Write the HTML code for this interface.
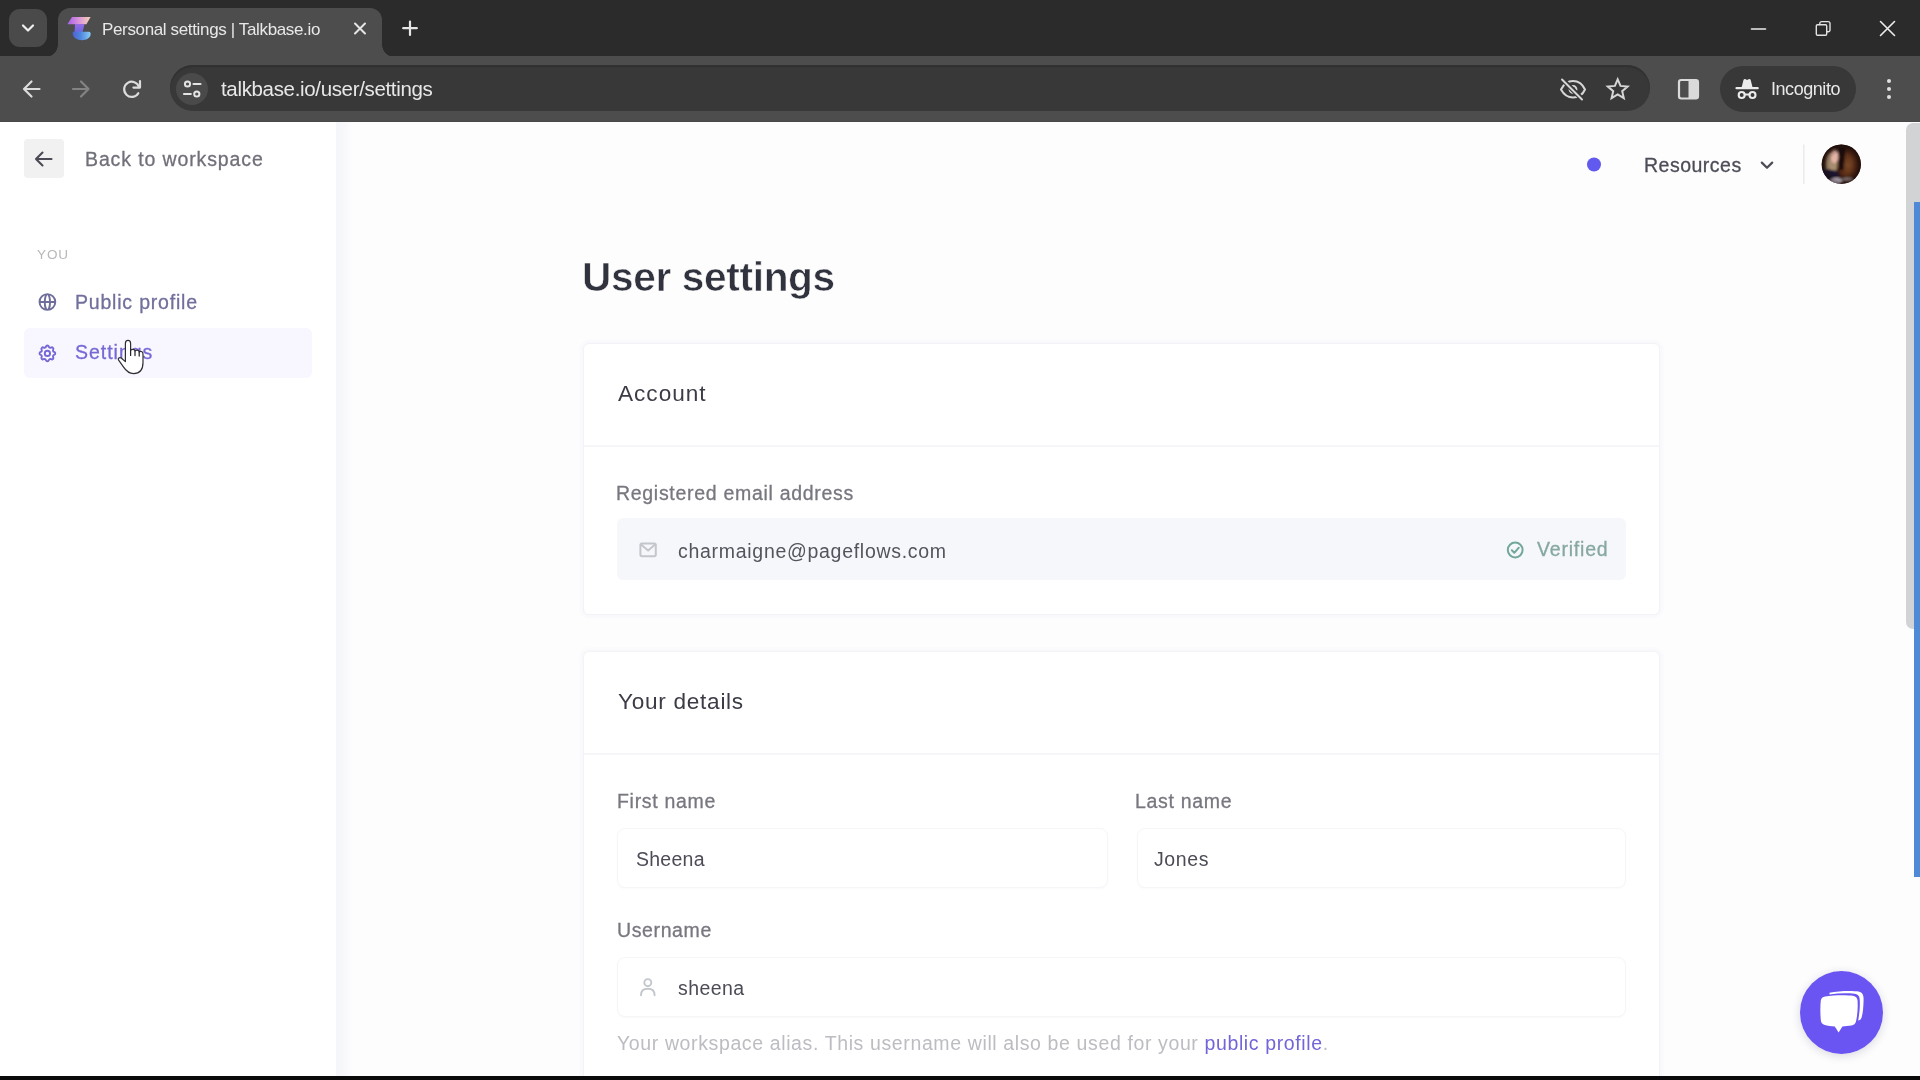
<!DOCTYPE html>
<html lang="en">
<head>
<meta charset="utf-8">
<title>Personal settings | Talkbase.io</title>
<style>
*{box-sizing:border-box;margin:0;padding:0}
html,body{width:1920px;height:1080px;overflow:hidden;background:#fff}
body{font-family:"Liberation Sans",Arial,sans-serif;position:relative;color:#3a3b45}
.abs{position:absolute}
.t{position:absolute;white-space:pre;line-height:1;will-change:transform}
/* ---------- browser chrome ---------- */
#tabstrip{left:0;top:0;width:1920px;height:57px;background:#2b2b2b}
#toolbar{left:0;top:56px;width:1920px;height:66px;background:#4d4d4d;border-bottom:1px solid #49494b}
#tabsearch{left:9px;top:9px;width:38px;height:38px;border-radius:11px;background:#4a4a4a}
#tab{left:58px;top:8px;width:324px;height:49px;background:#4d4d4d;border-radius:12px 12px 0 0}
#tab:before,#tab:after{content:"";position:absolute;bottom:0;width:12px;height:12px;background:radial-gradient(circle at 0 0,rgba(0,0,0,0) 11.5px,#4d4d4d 12px)}
#tab:before{left:-12px}
#tab:after{right:-12px;background:radial-gradient(circle at 100% 0,rgba(0,0,0,0) 11.5px,#4d4d4d 12px)}
#omni{left:170px;top:65px;width:1480px;height:46px;border-radius:23px;background:#383838;box-shadow:inset 0 2px 1px #313131}
#chip{left:176px;top:73px;width:32px;height:32px;border-radius:16px;background:#4a4a4a}
#incog{left:1720px;top:66px;width:136px;height:46px;border-radius:23px;background:#383838}
.cw{color:#e8e8e8}
.m{-webkit-text-stroke:.3px currentColor}
/* ---------- page ---------- */
#page{left:0;top:122px;width:1920px;height:954px;background:#fdfdfe;overflow:hidden}
#side{left:0;top:0;width:336px;height:954px;background:#fff}
#sideedge{left:336px;top:0;width:18px;height:954px;background:linear-gradient(90deg,#f5f6f9 0,#f8f8fb 45%,#fbfbfd 75%,#fdfdfe 100%)}
#bottombar{left:0;top:1076px;width:1920px;height:4px;background:#0a0a0a}
#backbtn{left:24px;top:17px;width:40px;height:39px;border-radius:4px;background:#f1f1f2}
#navsel{left:24px;top:206px;width:288px;height:50px;border-radius:6px;background:#f8f7ff}
.card{position:absolute;left:583px;width:1077px;background:#fff;border:1px solid #f3f3f7;border-radius:6px;box-shadow:0 0 0 2px #f9f9fc,0 0 0 4px #fbfbfd}
.hr{position:absolute;left:0;right:0;height:2px;background:#f6f6f9}
.inp{position:absolute;height:60px;background:#fff;border:1px solid #f6f6f9;border-radius:8px;box-shadow:0 1px 2px rgba(20,20,60,.022)}
#emailfield{left:617px;top:396px;width:1009px;height:62px;border-radius:6px;background:#f6f7fa}
/* scrollbar */
#sbthumb{left:1906px;top:1px;width:14px;height:506px;background:#d2d3d4;border-radius:7px 0 0 7px}
#sbblue{left:1914px;top:80px;width:6px;height:675px;background:#4f8ad6}
/* chat */
#chat{left:1800px;top:848.5px;width:83px;height:83px;border-radius:50%;background:#6a55f2;box-shadow:0 2px 10px rgba(30,30,60,.16)}
</style>
</head>
<body>
<!-- ======= Browser chrome ======= -->
<div id="tabstrip" class="abs"></div>
<div id="toolbar" class="abs"></div>
<div id="tabsearch" class="abs"></div>
<div id="tab" class="abs"></div>
<div id="omni" class="abs"></div>
<div id="chip" class="abs"></div>
<div id="incog" class="abs"></div>
<span class="t cw" style="left:102px;top:21px;font-size:17px;letter-spacing:-.355px">Personal settings | Talkbase.io</span>
<span class="t cw" style="left:221px;top:79px;font-size:20.5px;letter-spacing:-.338px">talkbase.io/user/settings</span>
<span class="t cw" style="left:1770.5px;top:80px;font-size:18px;letter-spacing:-.45px">Incognito</span>

<svg class="abs" style="left:0;top:0" width="1920" height="122" viewBox="0 0 1920 122" fill="none" stroke-linecap="round" stroke-linejoin="round">
  <defs>
    <linearGradient id="fv1" x1="0" y1="0" x2="1" y2="0"><stop offset="0" stop-color="#a560e8"/><stop offset=".5" stop-color="#dc94da"/><stop offset="1" stop-color="#f4d2b4"/></linearGradient>
    <linearGradient id="fv2" x1="0" y1="0" x2="0" y2="1"><stop offset="0" stop-color="#9a6ce6"/><stop offset="1" stop-color="#6668e2"/></linearGradient>
    <linearGradient id="fv3" x1="0" y1="0" x2="1" y2="0"><stop offset="0" stop-color="#4c62d6"/><stop offset=".45" stop-color="#4f86de"/><stop offset="1" stop-color="#8accf4"/></linearGradient>
  </defs>
  <!-- tab search chevron -->
  <path d="M23 25.5 L28 30.5 L33 25.5" stroke="#f0f0f0" stroke-width="2.2"/>
  <!-- favicon -->
  <path d="M72 17 H90.6 L86.4 24.2 H67.4 Z" fill="url(#fv1)"/>
  <path d="M75 24 H84.4 L82.6 32.6 H74.6 Z" fill="url(#fv2)"/>
  <path d="M72.6 33.6 C72.4 31.6 74.6 31.2 77 31.8 L88.6 31.8 C90.8 31.8 91 33.8 90.4 35.6 C89.4 38.6 86 40.2 82 40.2 C77 40.2 73 37.8 72.6 33.6 Z" fill="url(#fv3)"/>
  <!-- tab close -->
  <path d="M355 23.5 L365 33.5 M365 23.5 L355 33.5" stroke="#e6e6e6" stroke-width="2"/>
  <!-- new tab -->
  <path d="M410 21.5 V35 M403.2 28.2 H416.8" stroke="#e6e6e6" stroke-width="2.2"/>
  <!-- back -->
  <path d="M39.5 89 H24.5 M31.5 81.5 L24 89 L31.5 96.5" stroke="#dcdcdc" stroke-width="2.2"/>
  <!-- forward (disabled) -->
  <path d="M73 89 H88 M81 81.5 L88.5 89 L81 96.5" stroke="#838383" stroke-width="2.2"/>
  <!-- reload -->
  <path d="M139 87 A7.6 7.6 0 1 0 138.3 93.2" stroke="#dcdcdc" stroke-width="2.2"/>
  <path d="M140 81 V87.6 H133.4" stroke="#dcdcdc" stroke-width="2.2"/>
  <!-- site info (tune) -->
  <circle cx="187.5" cy="84" r="2.6" stroke="#e4e4e4" stroke-width="2"/>
  <path d="M193.5 84 H200.5" stroke="#e4e4e4" stroke-width="2.2"/>
  <circle cx="196.8" cy="94" r="2.6" stroke="#e4e4e4" stroke-width="2"/>
  <path d="M184 94 H190.8" stroke="#e4e4e4" stroke-width="2.2"/>
  <!-- eye off -->
  <path d="M1561 89.5 C1564 83.5 1568 81 1573 81 C1578 81 1582.5 84 1585 89.5 C1582.5 95 1578 97.5 1573 97.5 C1568 97.5 1564 95 1561 89.5 Z" stroke="#d6d6d6" stroke-width="2"/>
  <circle cx="1573" cy="89.3" r="3.4" stroke="#d6d6d6" stroke-width="2"/>
  <path d="M1562.5 79.5 L1582.5 99.5" stroke="#383838" stroke-width="5"/>
  <path d="M1562 79.5 L1582 99.5" stroke="#d6d6d6" stroke-width="2"/>
  <!-- star -->
  <path d="M1617.7 79.4 L1620.5 85.9 L1627.6 86.5 L1622.2 91.2 L1623.8 98.1 L1617.7 94.4 L1611.6 98.1 L1613.2 91.2 L1607.8 86.5 L1614.9 85.9 Z" stroke="#d6d6d6" stroke-width="2" stroke-linejoin="miter"/>
  <!-- side panel -->
  <rect x="1679" y="80" width="19" height="18.5" rx="2.2" stroke="#dadada" stroke-width="2.2"/>
  <rect x="1688.5" y="80" width="9.5" height="18.5" fill="#dadada"/>
  <!-- incognito -->
  <path d="M1736.5 88.2 H1757.7" stroke="#ececec" stroke-width="2.2"/>
  <path d="M1741.6 87.4 L1743.5 80 C1743.8 79 1744.8 78.8 1745.6 79.2 L1747.1 79.9 L1748.6 79.2 C1749.4 78.8 1750.4 79 1750.7 80 L1752.6 87.4 Z" fill="#ececec"/>
  <circle cx="1741.7" cy="95" r="3" stroke="#ececec" stroke-width="2.1"/>
  <circle cx="1752.5" cy="95" r="3" stroke="#ececec" stroke-width="2.1"/>
  <path d="M1744.8 94.4 H1749.4" stroke="#ececec" stroke-width="2"/>
  <!-- kebab -->
  <circle cx="1889" cy="81" r="2" fill="#e0e0e0"/><circle cx="1889" cy="89" r="2" fill="#e0e0e0"/><circle cx="1889" cy="97" r="2" fill="#e0e0e0"/>
  <!-- window controls -->
  <path d="M1751.5 29 H1765.5" stroke="#ededed" stroke-width="1.6"/>
  <rect x="1816.3" y="24.8" width="10.4" height="10.4" rx="1.2" stroke="#e2e2e2" stroke-width="1.4"/>
  <path d="M1819.8 24.6 V23.4 A1.8 1.8 0 0 1 1821.6 21.6 H1828.2 A1.8 1.8 0 0 1 1830 23.4 V30 A1.8 1.8 0 0 1 1828.2 31.8 H1827" stroke="#e2e2e2" stroke-width="1.4"/>
  <path d="M1880.5 21.5 L1894.5 35.5 M1894.5 21.5 L1880.5 35.5" stroke="#ededed" stroke-width="1.6"/>
</svg>


<!-- ======= Page ======= -->
<div id="page" class="abs">
  <div id="side" class="abs"></div>
  <div id="sideedge" class="abs"></div>
  <div id="backbtn" class="abs"></div>
  <div id="navsel" class="abs"></div>
  <span class="t m" style="left:85.2px;top:27.5px;font-size:19.5px;letter-spacing:.88px;color:#70707a">Back to workspace</span>
  <span class="t" style="left:37px;top:125.5px;font-size:13.5px;letter-spacing:.9px;color:#b7b7bb">YOU</span>
  <span class="t m" style="left:75.4px;top:170.5px;font-size:19.5px;letter-spacing:.8px;color:#716f9c">Public profile</span>
  <span class="t m" style="left:75.4px;top:221px;font-size:19.5px;letter-spacing:.98px;color:#7568d6">Settings</span>
  <span class="t m" style="left:1644.2px;top:34px;font-size:19.5px;letter-spacing:.5px;color:#4c4d57">Resources</span>
  <span class="t" id="h1" style="left:581.6px;top:135px;font-size:40.6px;font-weight:700;letter-spacing:-.33px;color:#30323e;-webkit-text-stroke:.6px #fdfdfe">User settings</span>

  <div class="card" style="top:221px;height:272px"><div class="hr" style="top:101px"></div></div>
  <span class="t" style="left:617.8px;top:261.2px;font-size:22.6px;letter-spacing:1px;color:#3b3c46">Account</span>
  <span class="t m" style="left:616.3px;top:362px;font-size:19.5px;letter-spacing:.7px;color:#77777f">Registered email address</span>
  <div id="emailfield" class="abs"></div>
  <span class="t" style="left:678px;top:419.5px;font-size:19.5px;letter-spacing:.71px;color:#53545d">charmaigne@pageflows.com</span>
  <span class="t m" style="left:1536.6px;top:418px;font-size:19.5px;letter-spacing:.8px;color:#86a8a0">Verified</span>

  <div class="card" style="top:529px;height:500px;border-bottom:0;border-radius:6px 6px 0 0"><div class="hr" style="top:101px"></div></div>
  <span class="t" style="left:617.8px;top:569.2px;font-size:22.6px;letter-spacing:.72px;color:#3b3c46">Your details</span>
  <span class="t m" style="left:616.8px;top:669.5px;font-size:19.5px;letter-spacing:.7px;color:#77777f">First name</span>
  <span class="t m" style="left:1135px;top:669.5px;font-size:19.5px;letter-spacing:.68px;color:#77777f">Last name</span>
  <div class="inp" style="left:617px;top:706px;width:491px"></div>
  <div class="inp" style="left:1137px;top:706px;width:489px"></div>
  <span class="t" style="left:635.5px;top:727.5px;font-size:19.5px;letter-spacing:.26px;color:#4b4c55">Sheena</span>
  <span class="t" style="left:1154.2px;top:727.5px;font-size:19.5px;letter-spacing:.6px;color:#4b4c55">Jones</span>
  <span class="t m" style="left:617px;top:799px;font-size:19.5px;letter-spacing:.62px;color:#77777f">Username</span>
  <div class="inp" style="left:617px;top:835px;width:1009px"></div>
  <span class="t" style="left:678px;top:856.5px;font-size:19.5px;letter-spacing:.4px;color:#4b4c55">sheena</span>
  <span class="t" style="left:617px;top:912px;font-size:19.5px;letter-spacing:.62px;color:#bcbcc2">Your workspace alias. This username will also be used for your <span style="color:#7265d8">public profile</span>.</span>
  
  <svg class="abs" style="left:0;top:0" width="1920" height="954" viewBox="0 122 1920 954" fill="none" stroke-linecap="round" stroke-linejoin="round">
    <defs>
      <clipPath id="avc"><circle cx="1841.3" cy="164.3" r="19.7"/></clipPath>
      <radialGradient id="vig" cx=".5" cy=".5" r=".5"><stop offset=".55" stop-color="#140808" stop-opacity="0"/><stop offset="1" stop-color="#140808" stop-opacity=".55"/></radialGradient>
      <filter id="avblur" x="-20%" y="-20%" width="140%" height="140%"><feGaussianBlur stdDeviation="1.3"/></filter>
      <radialGradient id="hair" cx=".45" cy=".5" r=".55"><stop offset="0" stop-color="#7a4a28"/><stop offset=".6" stop-color="#5a2c16"/><stop offset="1" stop-color="#2c130c"/></radialGradient>
    </defs>
    <!-- back to workspace arrow -->
    <path d="M51.5 159 H36 M42.5 152.5 L36 159 L42.5 165.5" stroke="#4a4b55" stroke-width="2.1"/>
    <!-- globe -->
    <g stroke="#6f6d9a" stroke-width="2.2" transform="translate(36.9 291.5) scale(.875)">
      <path d="M21 12a9 9 0 01-9 9m9-9a9 9 0 00-9-9m9 9H3m9 9a9 9 0 01-9-9m9 9c1.657 0 3-4.03 3-9s-1.343-9-3-9m0 18c-1.657 0-3-4.03-3-9s1.343-9 3-9m-9 9a9 9 0 019-9"/>
    </g>
    <!-- gear -->
    <g stroke="#7568d6" stroke-width="2.2" transform="translate(36.9 342.9) scale(.875)">
      <path d="M10.325 4.317c.426-1.756 2.924-1.756 3.35 0a1.724 1.724 0 002.573 1.066c1.543-.94 3.31.826 2.37 2.37a1.724 1.724 0 001.065 2.572c1.756.426 1.756 2.924 0 3.35a1.724 1.724 0 00-1.066 2.573c.94 1.543-.826 3.31-2.37 2.37a1.724 1.724 0 00-2.572 1.065c-.426 1.756-2.924 1.756-3.35 0a1.724 1.724 0 00-2.573-1.066c-1.543.94-3.31-.826-2.37-2.37a1.724 1.724 0 00-1.065-2.572c-1.756-.426-1.756-2.924 0-3.35a1.724 1.724 0 001.066-2.573c-.94-1.543.826-3.31 2.37-2.37.996.608 2.296.07 2.572-1.065z"/>
      <path d="M15 12a3 3 0 11-6 0 3 3 0 016 0z"/>
    </g>
    <!-- notification dot -->
    <circle cx="1594" cy="164.5" r="7" fill="#6259ef"/>
    <!-- chevron -->
    <path d="M1761.8 162.6 L1767 167.8 L1772.2 162.6" stroke="#4c4d57" stroke-width="2.2"/>
    <!-- divider -->
    <path d="M1803.8 145 V183.5" stroke="#ececef" stroke-width="1.6"/>
    <!-- avatar -->
    <g clip-path="url(#avc)">
      <rect x="1820" y="143" width="43" height="43" fill="#341a10"/>
      <g filter="url(#avblur)">
        <ellipse cx="1849" cy="165" rx="11" ry="17" fill="url(#hair)"/>
        <ellipse cx="1831.5" cy="164" rx="6" ry="12" fill="#a78c70"/>
        <ellipse cx="1834.6" cy="156.5" rx="4" ry="6.8" fill="#e3b3a6"/>
        <path d="M1838 144 H1846 L1843.5 170 H1839.5 Z" fill="#1e0e0a"/>
        <path d="M1820 168 L1838 171 L1840 186 H1820 Z" fill="#1b1330"/>
        <ellipse cx="1836.5" cy="180.8" rx="6.5" ry="3" fill="#ddd4e4"/>
        <ellipse cx="1848" cy="179.5" rx="5" ry="2" fill="#9c8e8c"/>
        <path d="M1826 144 H1858 L1862 152 L1850 148 L1834 148 L1822 154 Z" fill="#2a1410"/>
      </g>
      <circle cx="1841.3" cy="164.3" r="19.7" fill="url(#vig)"/>
    </g>
    <!-- mail -->
    <g stroke="#c3c6cc" stroke-width="2">
      <rect x="640.4" y="543.4" width="15.4" height="12.8" rx="1.6"/>
      <path d="M641 544.6 L648.1 550.6 L655.2 544.6"/>
    </g>
    <!-- verified check -->
    <g stroke="#72a799" stroke-width="2">
      <circle cx="1515.2" cy="550" r="7.4"/>
      <path d="M1511.8 550.3 L1514.3 552.8 L1518.8 547.7"/>
    </g>
    <!-- user -->
    <g stroke="#c3c6cc" stroke-width="1.9">
      <circle cx="647.8" cy="982.6" r="3.5"/>
      <path d="M641 995.2 C641 990.6 643.6 988.8 647.8 988.8 C652 988.8 654.6 990.6 654.6 995.2"/>
    </g>
  </svg>

  <div id="sbthumb" class="abs"></div>
  <div id="sbblue" class="abs"></div>
  <div id="chat" class="abs"></div>
  <svg class="abs" style="left:1800px;top:848px" width="83" height="83" viewBox="1800 970 83 83" fill="none">
    <path d="M1829.5 992.8 C1838 991 1852 990.6 1858.5 991.6 C1862.6 992.4 1863.8 995.4 1863.6 1000 C1863.4 1007 1863 1013 1861.6 1017.4 C1861 1019.4 1859.6 1020.2 1858.2 1020.4 C1859.8 1012 1860.2 1004 1859.6 998.6 C1859.2 995.6 1857.6 994.2 1854.6 993.8 C1847 993 1838 993.2 1829.5 994.4 Z" fill="#fff"/>
    <path d="M1825.2 996.4 C1833 995 1847 994.8 1853 995.8 C1856.2 996.4 1857.4 998 1857.6 1001 C1858 1007.6 1857.4 1015.6 1856 1021.4 C1855.4 1023.8 1853.8 1025 1851.4 1025.4 C1848.6 1025.8 1845 1026.2 1842.4 1026.4 L1838.6 1032.6 L1834.8 1026.4 C1831.4 1026.2 1827.4 1025.8 1824.8 1025 C1822.2 1024.2 1821 1022.6 1820.8 1020 C1820.2 1013.6 1820.2 1006.4 1820.8 1000.6 C1821.2 998 1822.6 996.8 1825.2 996.4 Z" fill="#fff"/>
  </svg>
  <!-- hand cursor -->
  <svg class="abs" style="left:114px;top:215px" width="36" height="42" viewBox="114 337 36 42">
    <path d="M125.4 343.4 C125.4 341.4 126.6 340.4 128 340.4 C129.4 340.4 130.6 341.4 130.6 343.4 V350.4 C131.2 349 134.6 348.8 135 351 C135.8 349.6 139 349.6 139.2 352 C140.2 350.8 143 351.2 143 354 V362.6 C143 369.6 139.4 373.6 133.6 373.6 C128.6 373.6 126.4 371.4 123.6 367.2 L118.6 360.2 C117.6 358.6 119.4 356.8 121.2 358 L125.4 361.6 Z" fill="#fff" stroke="#2e2e33" stroke-width="1.2" stroke-linejoin="round"/>
    <path d="M130.6 350.4 V355.4 M135 351 V355.6 M139.2 352 V356" stroke="#26262b" stroke-width="1.25" stroke-linecap="round" fill="none"/>
  </svg>
</div>
<div id="bottombar" class="abs"></div>
</body>
</html>
